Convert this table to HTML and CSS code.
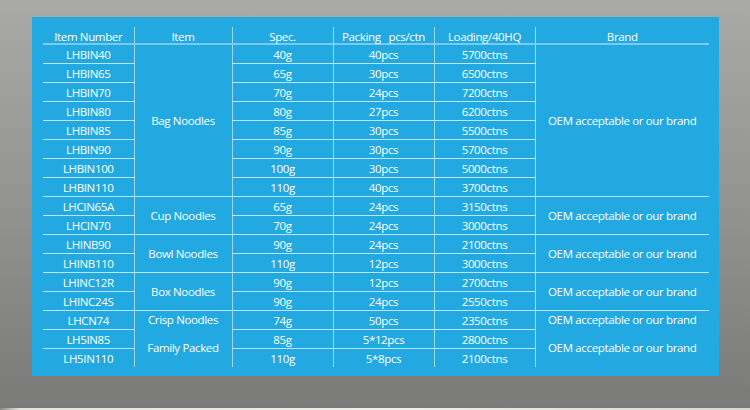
FILE: index.html
```html
<!DOCTYPE html>
<html>
<head>
<meta charset="utf-8">
<link rel="stylesheet" href="styles.css">
</head>
<body>
<div class="stage">
  <div class="panel">
    <table class="spec">
      <colgroup>
        <col class="c1"><col class="c2"><col class="c3"><col class="c4"><col class="c5"><col class="c6">
      </colgroup>
      <thead>
        <tr>
          <th>Item Number</th>
          <th class="vl">Item</th>
          <th class="vl">Spec.</th>
          <th class="vl">Packing&nbsp;&nbsp;&nbsp;pcs/ctn</th>
          <th class="vl">Loading/40HQ</th>
          <th class="vl">Brand</th>
        </tr>
      </thead>
      <tbody>
        <tr><td>LHBIN40</td><td class="vl grp" rowspan="8">Bag Noodles</td><td class="vl">40g</td><td class="vl">40pcs</td><td class="vl">5700ctns</td><td class="vl grp" rowspan="8">OEM acceptable or our brand</td></tr>
        <tr><td>LHBIN65</td><td class="vl">65g</td><td class="vl">30pcs</td><td class="vl">6500ctns</td></tr>
        <tr><td>LHBIN70</td><td class="vl">70g</td><td class="vl">24pcs</td><td class="vl">7200ctns</td></tr>
        <tr><td>LHBIN80</td><td class="vl">80g</td><td class="vl">27pcs</td><td class="vl">6200ctns</td></tr>
        <tr><td>LHBIN85</td><td class="vl">85g</td><td class="vl">30pcs</td><td class="vl">5500ctns</td></tr>
        <tr><td>LHBIN90</td><td class="vl">90g</td><td class="vl">30pcs</td><td class="vl">5700ctns</td></tr>
        <tr><td>LHBIN100</td><td class="vl">100g</td><td class="vl">30pcs</td><td class="vl">5000ctns</td></tr>
        <tr><td>LHBIN110</td><td class="vl">110g</td><td class="vl">40pcs</td><td class="vl">3700ctns</td></tr>
        <tr><td>LHCIN65A</td><td class="vl grp" rowspan="2">Cup Noodles</td><td class="vl">65g</td><td class="vl">24pcs</td><td class="vl">3150ctns</td><td class="vl grp" rowspan="2">OEM acceptable or our brand</td></tr>
        <tr><td>LHCIN70</td><td class="vl">70g</td><td class="vl">24pcs</td><td class="vl">3000ctns</td></tr>
        <tr><td>LHINB90</td><td class="vl grp" rowspan="2">Bowl Noodles</td><td class="vl">90g</td><td class="vl">24pcs</td><td class="vl">2100ctns</td><td class="vl grp" rowspan="2">OEM acceptable or our brand</td></tr>
        <tr><td>LHINB110</td><td class="vl">110g</td><td class="vl">12pcs</td><td class="vl">3000ctns</td></tr>
        <tr><td>LHINC12R</td><td class="vl grp" rowspan="2">Box Noodles</td><td class="vl">90g</td><td class="vl">12pcs</td><td class="vl">2700ctns</td><td class="vl grp" rowspan="2">OEM acceptable or our brand</td></tr>
        <tr><td>LHINC24S</td><td class="vl">90g</td><td class="vl">24pcs</td><td class="vl">2550ctns</td></tr>
        <tr><td>LHCN74</td><td class="vl grp nob">Crisp Noodles</td><td class="vl">74g</td><td class="vl">50pcs</td><td class="vl">2350ctns</td><td class="vl grp nob">OEM acceptable or our brand</td></tr>
        <tr><td>LH5IN85</td><td class="vl grp nob" rowspan="2">Family Packed</td><td class="vl">85g</td><td class="vl">5*12pcs</td><td class="vl">2800ctns</td><td class="vl grp nob" rowspan="2">OEM acceptable or our brand</td></tr>
        <tr class="last"><td>LH5IN110</td><td class="vl">110g</td><td class="vl">5*8pcs</td><td class="vl">2100ctns</td></tr>
      </tbody>
    </table>
  </div>
</div>
<div class="foot"></div>
</body>
</html>
```

FILE: styles.css
```css
html, body {
  margin: 0;
  padding: 0;
  width: 750px;
  height: 410px;
  overflow: hidden;
  background: #777775;
}

.stage {
  width: 750px;
  height: 408px;
  box-sizing: border-box;
  padding: 17px 0 0 32px;
  background: linear-gradient(to bottom, #a9a9a8 0%, #959594 45%, #7a7a78 100%);
}

.foot {
  height: 2px;
  background: linear-gradient(to right, #8a8a88 0px, #e4e4de 20px, #eeeeea 400px, #d8d8d2 750px);
}

.panel {
  width: 687px;
  height: 359px;
  box-sizing: border-box;
  padding: 10px 0 0 11px;
  background: #22a9e1;
}

.spec {
  width: 666px;
  table-layout: fixed;
  border-collapse: collapse;
  border-spacing: 0;
  font-family: "Open Sans", "Noto Sans", sans-serif;
  font-size: 11.5px;
  letter-spacing: -0.35px;
  color: #ffffff;
}

.c1 { width: 91px; }
.c2 { width: 98px; }
.c3 { width: 101px; }
.c4 { width: 101px; }
.c5 { width: 101px; }
.c6 { width: 174px; }

.spec th {
  font-weight: normal;
  height: 16px;
  box-sizing: border-box;
  padding: 3px 0 0 0;
  line-height: 13px;
  text-align: center;
  white-space: nowrap;
  border-bottom: 2px solid rgba(255, 255, 255, 0.4);
}

.spec td {
  height: 18px;
  box-sizing: border-box;
  padding: 2px 0 0 0;
  line-height: 16px;
  text-align: center;
  white-space: nowrap;
  border-bottom: 1px solid rgba(255, 255, 255, 0.7);
}

.spec .vl {
  border-left: 1px solid rgba(255, 255, 255, 0.55);
}

.spec td.grp {
  padding: 0;
}

.spec td.nob,
.spec tr.last td {
  border-bottom: none;
}
```
